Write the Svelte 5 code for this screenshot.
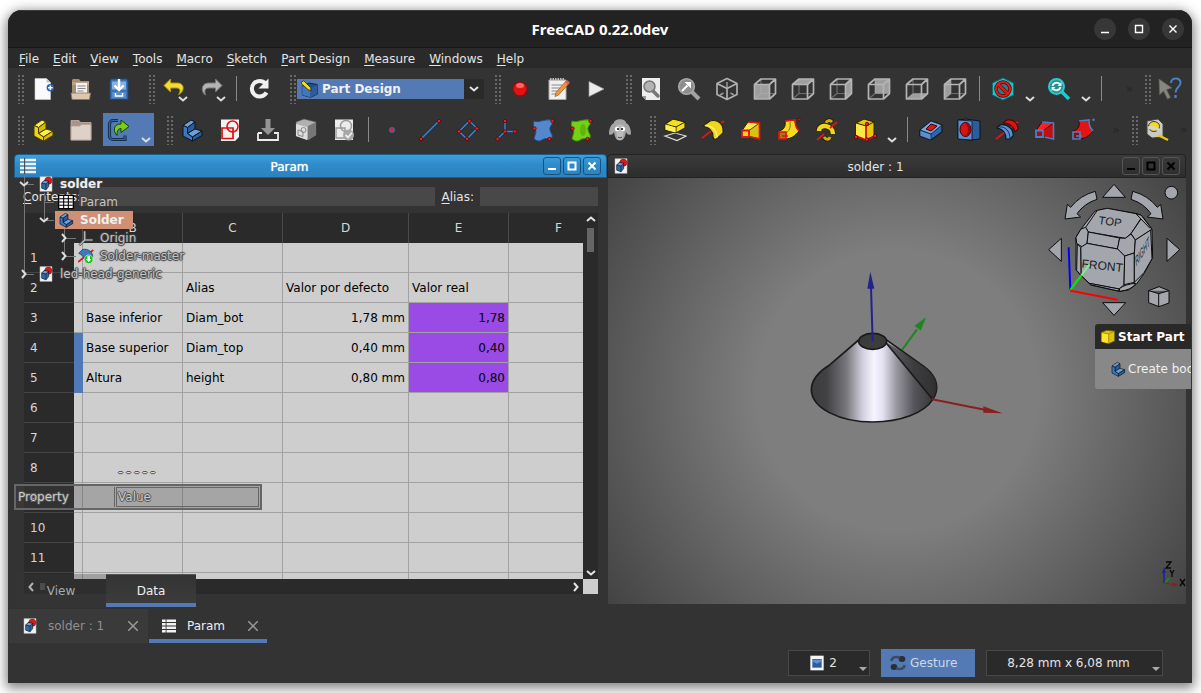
<script>
  const doc = '<path d="M3 1h18v22H3z" fill="#f4f4f4" stroke="#bbb" stroke-width=".8"/><circle cx="15.500" cy="7" r="5.400" fill="#e01515" stroke="#7d0000" stroke-width=".6"/><path d="M5.500 10.500l4-4 6.500 1.300v8l-4 5-6.500-2.600z" fill="#3465a4" stroke="#0b1521"/><path d="M5.500 10.500l6.500 1.500 4-4M12 12v8.500" fill="none" stroke="#0b1521" stroke-width=".8"/><path d="M7 10l3-2.500 5 1L12 11z" fill="#729fcf"/>';

  const body = (top, side, front, line) =>
    `<g stroke="${line}" stroke-width="1" stroke-linejoin="round"><path d="M3 7.500L11 2l4 2-7.500 5.500z" fill="${top}"/><path d="M7.500 9.500L15 4v7l-7.500 4.500z" fill="${side}"/><path d="M7.500 15.500L15 11l7 2-9.500 6z" fill="${top}"/><path d="M12.500 19l9.500-6v4.500L12.500 23z" fill="${side}"/><path d="M3 7.500l4.500 2v6l5 3.500v4L3 18z" fill="${front}"/></g>`;

  const cube = (face) => {
    const faces = {
      front: 'M1.500 7.500h15v14.500h-15z',
      top: 'M1.500 7.500L8 2h14.500l-6 5.500z',
      right: 'M16.500 7.500l6-5.500v14.500l-6 5.500z',
      rear: 'M8 2h14.500v14.500H8z',
      bottom: 'M1.500 22L8 16.500h14.500l-6 5.500z',
      left: 'M1.500 7.500L8 2v14.500L1.500 22z'
    };
    return `<path d="M8 2v14.500h14.500M8 16.500L1.500 22" fill="none" stroke="#6d6d6d" stroke-width="1.200"/><path d="${faces[face]}" fill="#b2b2b2" fill-opacity=".85"/><path d="M1.500 7.500h15v14.500h-15zM1.500 7.500L8 2h14.500l-6 5.500M22.500 2v14.500l-6 5.500" fill="none" stroke="#b4b4b4" stroke-width="1.700" stroke-linejoin="round"/>`;
  };

  const dot = (x, y, r = 1.7) => `<circle cx="${x}" cy="${y}" r="${r}" fill="#ef2020" stroke="#5c0000" stroke-width=".8"/>`;

  const icons = {
    doc,
    newdoc: '<path d="M4 1.500h11.500l4 4v17H4z" fill="#fafafa" stroke="#d0d0d0" stroke-width=".6"/><path d="M15.500 1.500v4h4z" fill="#c4c4c4"/><circle cx="19.300" cy="10.700" r="3.700" fill="#2f64ab"/><path d="M19.300 8.400v4.600M17 10.700h4.600" stroke="#fff" stroke-width="1.500"/>',
    open: '<path d="M3 3l1-1h6l1.500 2H20v14H3z" fill="#a58f74"/><path d="M3 5h17v3H3z" fill="#bda687"/><path d="M7 6h11v11H7z" fill="#f2f2f2"/><path d="M8.500 9h8M8.500 11.500h8M8.500 14h6" stroke="#888" stroke-width="1.200"/><path d="M2 16h19.500L20.500 22.500H3z" fill="#dcc8ac" stroke="#8b7759" stroke-width=".8"/>',
    save: '<path d="M4 2h16l1 3v17.500H3V5z" fill="#3a72b8" stroke="#1d4678"/><path d="M5 4.500h14v8H5z" fill="#88b0df"/><path d="M5 15h14v6H5z" fill="#5a8ccb"/><path d="M12 2v10M7.500 8.500L12 13l4.500-4.500" fill="none" stroke="#fff" stroke-width="2.400"/><path d="M8.500 16v3h7v-3" fill="none" stroke="#fff" stroke-width="1.500"/>',
    undo: '<path d="M8.500 2L2 8.500l6.500 6.500v-4h6c4 0 4.500 3 2 6.500 6-2.500 7-11.500-1.500-11.500H8.500z" fill="#f5dc35" stroke="#b39400" stroke-width="1" stroke-linejoin="round"/>',
    redo: '<path d="M15.500 2l6.500 6.500-6.500 6.500v-4H9c-3.500 0-5 2-3.500 7C1 15.500.5 6 8.500 6h7z" fill="#b4b4b4" stroke="#777" stroke-width="1" stroke-linejoin="round"/>',
    refresh: '<path d="M18.500 15.500a7.800 7.800 0 1 1-1-9" fill="none" stroke="#f0f0f0" stroke-width="4"/><path d="M20.500 1.500v10h-10z" fill="#f0f0f0"/>',
    record: '<circle cx="12" cy="12" r="7" fill="#e01212" stroke="#8b0f0f" stroke-width="1.300"/><ellipse cx="12" cy="8.500" rx="4" ry="2.500" fill="#f66"/>',
    macro: '<path d="M3 3h17v19.500H3z" fill="#f0f0f0" stroke="#aaa"/><path d="M4 2.500h15" stroke="#bcbcbc" stroke-width="3" stroke-dasharray="1.500 1"/><path d="M5.500 8h11M5.500 11h9M5.500 14h7M5.500 17h5" stroke="#888" stroke-width="1"/><path d="M20 4l3 2.500L12.500 18l-3.500 1.500 1-4z" fill="#f0953b" stroke="#a5551c" stroke-width=".7"/><path d="M19 5l2-2 3 2.500-2 2z" fill="#e05c5c"/>',
    play: '<path d="M5 4.500l15 7.500-15 7.500z" fill="#ececec" stroke="#999" stroke-width=".7"/>',
    fitall: '<path d="M3 1h18v22H7l-4-4z" fill="#ededed"/><path d="M3 19h4v4z" fill="#999"/><path d="M13 13l6 6" stroke="#777" stroke-width="3.500" stroke-linecap="round"/><circle cx="10.500" cy="9.500" r="5.500" fill="#b4b4b4" stroke="#777" stroke-width="1.500"/>',
    fitsel: '<path d="M14 14l8 8" stroke="#a2a2a2" stroke-width="4"/><circle cx="9.500" cy="9.500" r="7.800" fill="#8d8d8d" stroke="#a8a8a8" stroke-width="1.600"/><path d="M5 14l5.500-5.500" stroke="#fff" stroke-width="2"/><path d="M7.500 5H14v6.500z" fill="#fff"/>',
    iso: '<path d="M12 5v6M5 18l3.500-2M19 18l-3.500-2" stroke="#999" stroke-width="1.500"/><path d="M12 1.500l10 5v11l-10 5-10-5v-11zM2 6.500l10 5 10-5M12 11.500v11" fill="none" stroke="#b0b0b0" stroke-width="1.700" stroke-linejoin="round"/>',
    front: cube('front'), top: cube('top'), right: cube('right'), rear: cube('rear'), bottom: cube('bottom'), left: cube('left'),
    nodraw: '<path d="M12 1l10.500 5v12L12 23 1.500 18V6z" fill="#18c8cc" stroke="#0b6f72"/><circle cx="12" cy="12" r="7" fill="#1b8386" stroke="#4b0000" stroke-width="3.400"/><path d="M7 7l10 10" stroke="#4b0000" stroke-width="3.800"/><circle cx="12" cy="12" r="7" fill="none" stroke="#e21717" stroke-width="2.200"/><path d="M7 7l10 10" stroke="#e21717" stroke-width="2.600"/>',
    zoomcyan: '<path d="M14.500 14.500l7.500 7.500" stroke="#1fc8cc" stroke-width="3.500"/><circle cx="9.500" cy="9.500" r="7.500" fill="#2b8c90" stroke="#20cfd2" stroke-width="2"/><path d="M5.500 9c1-4 6-4 7.500-1.500M13.500 10c-1 4-6 4-7.500 1.500" fill="none" stroke="#eee" stroke-width="2"/><path d="M14.500 5v4h-4zM4.500 14v-4h4z" fill="#eee"/>',
    whats: '<path d="M1 2l13 9-5.500 1.500 4 8-3 1.500-4-8L1.500 18z" fill="#84867f" stroke="#5c5e58" stroke-width=".7"/><path d="M13 6c0-6 10-6 9.500 0 0 4-5 4-5 9.500" fill="none" stroke="#4a7fc1" stroke-width="2"/><path d="M17.500 18v3" stroke="#4a7fc1" stroke-width="2.500"/>',
    part: body('#fcf04a', '#d8bb00', '#eed414', '#463c00'),
    group: '<path d="M2 2.500h8l1.500 2H22V22H2z" fill="#a89489" stroke="#c5b2a8" stroke-width=".8"/><path d="M2 8h9l1-1.500h10V22H2z" fill="#ddd1c8" stroke="#b19d92" stroke-width=".8"/>',
    link: '<path d="M11 2.500H6a3.500 3.500 0 0 0-3.500 3.500v12A3.500 3.500 0 0 0 6 21.500h12v-4" fill="none" stroke="#16304f" stroke-width="3.200"/><path d="M11 2.500H6a3.500 3.500 0 0 0-3.500 3.500v12A3.500 3.500 0 0 0 6 21.500h12v-4" fill="none" stroke="#3465a4" stroke-width="1.200"/><path d="M14 2l8 6.500-8 6v-4c-3 0-4 2.500-4 7-4-4-4-11.500 4-11.500z" fill="#73d216" stroke="#173d02" stroke-width="1"/>',
    body: body('#6b9fd8', '#2b5c9c', '#3f78bd', '#0b1521'),
    sketch: '<path d="M3 1.500h18V19l-4 4H3z" fill="#f2f2f2"/><circle cx="14.500" cy="8.500" r="5.500" fill="none" stroke="#dc1010" stroke-width="1.500"/><path d="M4 10h11v10.500H4z" fill="none" stroke="#dc1010" stroke-width="1.700"/>',
    import: '<path d="M2 15v7h20v-7h-4M2 15h4" fill="none" stroke="#ececec" stroke-width="1.800"/><path d="M9.500 1h5v9h4.500L12 17 5 10h4.500z" fill="#949494"/>',
    mapsk: '<path d="M2 4l8-3 12 3v13l-8 5-12-4z" fill="#b0b0b0" stroke="#555" stroke-width=".6"/><path d="M14 8l8-4v13l-8 5z" fill="#777"/><path d="M2 6l11 3v13L2 18z" fill="#dedede"/><path d="M4 12l5 1.500v5L4 17z" fill="none" stroke="#888"/><circle cx="9.500" cy="12" r="2.500" fill="none" stroke="#888"/>',
    valid: '<path d="M3 1.500h18V22H3z" fill="#ececec"/><circle cx="14" cy="8" r="5.500" fill="none" stroke="#999" stroke-width="1.400"/><path d="M4 10h9v10H4z" fill="none" stroke="#999" stroke-width="1.400"/><circle cx="16.500" cy="17" r="5.500" fill="#a8a8a8"/><path d="M13.500 17l2.500 2.500 4-5" fill="none" stroke="#eee" stroke-width="1.800"/>',
    point: '<circle cx="12" cy="12" r="3" fill="#3465a4"/><circle cx="12" cy="12" r="1.900" fill="#ef2020"/>',
    line: '<path d="M3 21L21 3" stroke="#16304f" stroke-width="3"/><path d="M3 21L21 3" stroke="#4a80c4" stroke-width="1.400"/>' + dot(3, 21) + dot(21, 3),
    plane: '<path d="M13.500 3L21 10.500 11 21 3 13.500z" fill="none" stroke="#16304f" stroke-width="3"/><path d="M13.500 3L21 10.500 11 21 3 13.500z" fill="none" stroke="#4a80c4" stroke-width="1.400"/>' + dot(13.5, 3) + dot(21, 10.5) + dot(11, 21) + dot(3, 13.5),
    axes: '<path d="M11 3v10.500h10M11 13.500L3.500 21" fill="none" stroke="#16304f" stroke-width="3"/><path d="M11 3v10.500h10M11 13.500L3.500 21" fill="none" stroke="#4a80c4" stroke-width="1.400"/>' + dot(11, 3) + dot(11, 13.5) + dot(21, 13.5) + dot(3.5, 21),
    binder: '<path d="M2 3c6 2 8-2 19-1 1 4-4 6-3 10s3 4 2 8c-6 1-7 0-10 2s-5 1-8-1c1-5 3-7 1-10s-2-4-1-8z" fill="#5588cb" stroke="#224c83"/>' + dot(20.5, 3) + dot(2.5, 10.5) + dot(17.5, 21),
    bindgreen: '<path d="M2 3c6 2 8-2 19-1 1 4-4 6-3 10s3 4 2 8c-6 1-7 0-10 2s-5 1-8-1c1-5 3-7 1-10s-2-4-1-8z" fill="#73d216" stroke="#3e8d04"/><ellipse cx="13" cy="12" rx="3" ry="6" fill="#4e9a06" opacity=".5"/>' + dot(20.5, 3) + dot(2.5, 10.5) + dot(17.5, 21),
    sheep: '<path d="M6 5c0-5 12-5 12 0 3 1 5 6 5 11-2 2-4 0-5-2-1 5-2 8-6 8.500-4 0-5-3-6-8.500-1 2-3 4-5 2 0-5 2-10 5-11z" fill="#a5a5a5"/><path d="M8 8c2-2 6-2 8 0l-1 11c-1 4-5 4-6 0z" fill="#bcbcbc"/><circle cx="9" cy="11" r="2.200" fill="#fff"/><circle cx="15" cy="11" r="2.200" fill="#fff"/><circle cx="10" cy="11" r="1"/><circle cx="14" cy="11" r="1"/><path d="M10 19l2 1 2-1" stroke="#444" fill="none"/>',
    pad: '<path d="M2 18l10-3 11 3-9 4.500z" fill="none" stroke="#ddd" stroke-width="1.200"/><path d="M2 6l8-5 12 3v6l-9 5-11-3z" fill="#f5df1d" stroke="#2a2400" stroke-width="1.100"/><path d="M2 6l11 3 9-5M13 9v6" fill="none" stroke="#2a2400"/><path d="M2.500 6.500L12.500 9.500v5L2.500 11.700z" fill="#fcef50"/>',
    revolve: '<path d="M1 20L23 3" stroke="#e01515" stroke-width="1.800"/><path d="M2 8l7-5c8-2 13 3 13 9v3l-7 6.500c-2 0-3-1-3-3 0-5-3-9-10-10.500z" fill="#efd51b" stroke="#2a2400" stroke-width="1.100" stroke-linejoin="round"/><path d="M4 7.500c7 0 12 5 12 12" fill="none" stroke="#fbf07a" stroke-width="1.500"/>',
    loft: '<path d="M3 12.500L9 4l11.500 1v15.500L10 18.500H3z" fill="#fbe94a" stroke="#2a2400"/><path d="M10 12.500L20.500 5v15.500L10 18.500z" fill="#dcc011" stroke="#2a2400" stroke-width=".8"/><path d="M9 4l11.500 1v16l-9-2" fill="none" stroke="#e01515" stroke-width="1.700"/><path d="M3 12.500h7v6.500H3z" fill="#f3dc20" stroke="#e01515" stroke-width="1.800"/>',
    pipe: '<path d="M2 13c5-1 7-5 6-10l9-1c3 3 1 6 5 11-4 5-8 8-14 8H2z" fill="#f3dc20" stroke="#2a2400"/><path d="M13 4c1 6-1 9-4 11" fill="none" stroke="#8d7900"/><path d="M8 3l10-1c0 5 1 8 4 11" fill="none" stroke="#e01515" stroke-width="1.600"/><path d="M2 14h7v7H2z" fill="#9d7f09" stroke="#e01515" stroke-width="1.700"/><path d="M5 18h6" stroke="#e01515" stroke-width="1.500"/>' + dot(22, 1.8, 1.3),
    helix: '<path d="M9 19c2 3 5 3 6 0M11 5c1-3 4-3 6-1" stroke="#2a2400" stroke-width="5" fill="none"/><path d="M9 19c2 3 5 3 6 0M11 5c1-3 4-3 6-1" stroke="#cfaa12" stroke-width="3" fill="none"/><path d="M4 13c0-8 14-6 14 3" fill="none" stroke="#2a2400" stroke-width="6.500"/><path d="M4 13c0-8 14-6 14 3" fill="none" stroke="#efd51b" stroke-width="4.500"/><path d="M2 22l7-6M15 10l7-6" stroke="#e01515" stroke-width="1.700"/>',
    box: '<path d="M3 5l8-4 10 3v14l-8 4-10-3z" fill="#e5c70c" stroke="#2a2400"/><path d="M3 5l10 3v14L3 19z" fill="#fbe94a"/><path d="M3 5l10 3 8-4" fill="none" stroke="#2a2400"/><path d="M13 6v14M3 18l10 4 9-4" fill="none" stroke="#c00" stroke-width="1.600"/>' + dot(14, 6) + dot(3, 19) + dot(14, 21.5) + dot(22, 18),
    plainbox: '<path d="M2 5l8-3 12 1v15l-9 4-11-3z" fill="#e0c30b" stroke="#5e5000"/><path d="M2.500 6L13 7.500v14L2.500 19z" fill="#fbe52e"/><path d="M2 5l11 2.500L22 3M13 7.500V22" fill="none" stroke="#8d7900"/>',
    pocket: '<path d="M1 12l11-9 11 4v7l-11 8-11-4z" fill="#2f66ab" stroke="#0b1521" stroke-width="1.100"/><path d="M1 12l11 4v6L1 18z" fill="#5b90d0" stroke="#0b1521" stroke-width=".6"/><path d="M1 12l11-9 11 4-11 9z" fill="#76a6de" stroke="#0b1521" stroke-width=".8"/><path d="M7 11l5-5 6 2-6 5z" fill="#e01515" stroke="#3d0000"/>',
    hole: '<path d="M1 2l8-1 14 2v18l-9 1-13-1z" fill="#2b5c9c" stroke="#0b1521"/><path d="M1 2l14 1v19L1 21z" fill="#5b90d0" stroke="#0b1521" stroke-width=".8"/><ellipse cx="8.500" cy="11.500" rx="5.500" ry="7" fill="#d91212" stroke="#3d0000"/><path d="M8 5c4 3 4 10 0 13 7 0 7-13 0-13z" fill="#920a0a"/>',
    groove: '<path d="M1 21L23 4" stroke="#e01515" stroke-width="1.800"/><path d="M8 5l4-3c7-1 11 4 11 9l-3 3c-1-5-5-9-12-9z" fill="#d91212" stroke="#3d0000"/><path d="M2 10l3-3c8-2 14 5 13 11l-3 3h-4c0-6-3-10-9-11z" fill="#5b90d0" stroke="#0b1521" stroke-width="1.100"/><path d="M4 9c7-1 11 5 11 12" stroke="#16304f" fill="none"/>',
    subloft: '<path d="M3 12.500L9 4l11.500 1v15.500L10 18.500H3z" fill="#f22" stroke="#3d0000"/><path d="M10 12.500L20.500 5v15.500L10 18.500z" fill="#c00f0f" stroke="#3d0000" stroke-width=".8"/><path d="M9 4l11.500 1v16l-9-2" fill="none" stroke="#4a80c4" stroke-width="1.600"/><path d="M3 12.500h7v6.500H3z" fill="#a80e0e" stroke="#4a80c4" stroke-width="1.800"/>',
    subpipe: '<path d="M2 13c5-1 7-5 6-10l9-1c3 3 1 6 5 11-4 5-8 8-14 8H2z" fill="#e01515" stroke="#3d0000"/><path d="M8 3l10-1c0 5 1 8 4 11" fill="none" stroke="#4a80c4" stroke-width="1.600"/><path d="M2 14h7v7H2z" fill="#8e0d0d" stroke="#4a80c4" stroke-width="1.700"/><path d="M5 18h6" stroke="#4a80c4" stroke-width="1.400"/><circle cx="22.500" cy="1.800" r="1.200" fill="#4a80c4"/>',
    measure: '<path d="M2 3l11-2 5 5v13l-11 1-5-4z" fill="#c9cbc4" stroke="#454640"/><ellipse cx="9" cy="8.500" rx="5.500" ry="5" fill="#f3dc20" stroke="#3e3f38"/><path d="M3 10c4-1 8 0 11 2" stroke="#d4d5d0" stroke-width="3" fill="none"/><path d="M11 19l4-3 2 3z" fill="#e5cc14"/><path d="M15 18l8 4" stroke="#e5cc14" stroke-width="2.200"/>',
    wb: '<path d="M3 8l9-4 11 2v13l-9 4-11-3z" fill="#1f4e8c" stroke="#0b1521"/><path d="M3 8l11 3v12L3 20z" fill="#3f78bd"/><path d="M14 11l9-5v13l-9 4z" fill="#2b5c9c"/><path d="M2 3l3-2 9 9 1 4-4-1-9-8z" fill="#f3dc20" stroke="#2a2400"/>',
    sheet: '<path d="M1 2h22v20H1z" fill="#fff" stroke="#000" stroke-width="2"/><path d="M2 7h20M2 12h20M2 17h20M8.500 2v20M15.500 2v20" stroke="#000" stroke-width="1.600"/>',
    rows: '<path d="M0 3h24M0 9h24M0 15h24M0 21h24" stroke="#f2f2f2" stroke-width="4"/><path d="M7 0v24" stroke="#3a3a3a" stroke-width="1.500"/>',
    origin: '<path d="M10 2v13h12M10 15l-8 8" fill="none" stroke="#555" stroke-width="4"/><path d="M10 2v13h12M10 15l-8 8" fill="none" stroke="#bbb" stroke-width="1.800"/>',
    master: '<path d="M0 21L23 3" stroke="#e01515" stroke-width="2.500"/><path d="M1 8l6-6c8-1 15 3 15 11l-7 7c-3-1-4-2-5-4-2-4-5-6-9-8z" fill="#3f78bd" stroke="#16304f"/><circle cx="16" cy="17" r="6.500" fill="#0bc30b" stroke="#eee"/><path d="M14 12.500h4v4h2.500L16 21.500l-4.500-5H14z" fill="#fff"/>',
    view: '<path d="M2 1h20v22H2z" fill="#f5f5f5"/><path d="M5 6h14v13H5z" fill="#2c5c9f"/><path d="M6 7h12v3l-6 3-6-3z" fill="#5c8fce"/>',
    gesture: '<ellipse cx="18" cy="6" rx="5" ry="4.500" fill="#2a2e35"/><path d="M2 9c1-6 7-7 13-5" stroke="#3c4b64" stroke-width="4" fill="none"/><ellipse cx="6" cy="18" rx="5" ry="4.500" fill="#2a2e35"/><path d="M22 15c-1 6-7 7-13 5" stroke="#3c4b64" stroke-width="4" fill="none"/>'
  };

  const t = (icon, label, drop = '') => ({ icon, label, drop });
  const menus = ['File', 'Edit', 'View', 'Tools', 'Macro', 'Sketch', 'Part Design', 'Measure', 'Windows', 'Help'];
  const fileTools = [t('newdoc', 'New'), t('open', 'Open'), t('save', 'Save')];
  const editTools = [t('undo', 'Undo', 'over'), t('redo', 'Redo', 'over'), null, t('refresh', 'Refresh')];
  const macroTools = [t('record', 'Record macro'), t('macro', 'Macros'), t('play', 'Run macro')];
  const viewTools = [
    t('fitall', 'Fit all'), t('fitsel', 'Fit selection'), t('iso', 'Isometric'), t('front', 'Front'), t('top', 'Top'),
    t('right', 'Right'), t('rear', 'Rear'), t('bottom', 'Bottom'), t('left', 'Left'), null,
    t('nodraw', 'Draw style', 'wide'), t('zoomcyan', 'Sync view', 'wide'), null
  ];
  const structure = [t('part', 'Create part'), t('group', 'Create group'), t('link', 'Make link', 'wide active')];
  const helper = [
    t('body', 'Create body'), t('sketch', 'Create sketch'), t('import', 'Edit sketch'), t('mapsk', 'Map sketch'), t('valid', 'Validate sketch'), null,
    t('point', 'Datum point'), t('line', 'Datum line'), t('plane', 'Datum plane'), t('axes', 'Local coordinate system'),
    t('binder', 'Shape binder'), t('bindgreen', 'Sub-shape binder'), t('sheep', 'Clone')
  ];
  const modeling = [
    t('pad', 'Pad'), t('revolve', 'Revolution'), t('loft', 'Additive loft'), t('pipe', 'Additive pipe'), t('helix', 'Additive helix'),
    t('box', 'Additive primitive', 'wide'), null,
    t('pocket', 'Pocket'), t('hole', 'Hole'), t('groove', 'Groove'), t('subloft', 'Subtractive loft'), t('subpipe', 'Subtractive pipe')
  ];

  const cells = {
    2: ['', 'Alias', 'Valor por defecto', 'Valor real'],
    3: ['Base inferior', 'Diam_bot', '1,78 mm', '1,78'],
    4: ['Base superior', 'Diam_top', '0,40 mm', '0,40'],
    5: ['Altura', 'height', '0,80 mm', '0,80']
  };
  const rows = Array.from({ length: 12 }, (_, i) => ({ n: i + 1, c: cells[i + 1] ?? ['', '', '', ''] }));

  const tree = [
    { d: 0, open: true, icon: 'doc', text: 'solder', bold: true },
    { d: 1, icon: 'sheet', text: 'Param' },
    { d: 1, open: true, icon: 'body', text: 'Solder', bold: true, sel: true },
    { d: 2, open: false, icon: 'origin', text: 'Origin' },
    { d: 2, open: false, icon: 'master', text: 'Solder-master' },
    { d: 0, open: false, icon: 'doc', text: 'led-head-generic' }
  ];
</script>

{#snippet ico(name, cls = 'i24')}
  <svg class={cls} viewBox="0 0 24 24" aria-hidden="true">{@html icons[name]}</svg>
{/snippet}

{#snippet chev(cls)}
  <svg class={cls} viewBox="0 0 10 6" aria-hidden="true"><path d="M1 1l4 3.500L9 1" fill="none" stroke="currentColor" stroke-width="2" /></svg>
{/snippet}

{#snippet group(items)}
  <div class="group" role="toolbar">
    <span class="handle"></span>
    {#each items as it}
      {#if it}
        <button class="tool {it.drop}" aria-label={it.label}>
          {@render ico(it.icon)}
          {#if it.drop}{@render chev('drop')}{/if}
        </button>
      {:else}
        <span class="sep"></span>
      {/if}
    {/each}
  </div>
{/snippet}

{#snippet winButtons()}
  <div class="winbtns">
    <button aria-label="Minimize"><svg viewBox="0 0 12 12"><path d="M2 9h8" /></svg></button>
    <button aria-label="Maximize"><svg viewBox="0 0 12 12"><path d="M2.500 2.500h7v7h-7z" /></svg></button>
    <button aria-label="Close"><svg viewBox="0 0 12 12"><path d="M2.500 2.500l7 7M9.500 2.500l-7 7" /></svg></button>
  </div>
{/snippet}

<div class="page">
  <main class="window">
    <header class="title">
      <h1>FreeCAD 0.22.0dev</h1>
      <div class="ctl">
        <button aria-label="Minimize window"><svg viewBox="0 0 12 12"><path d="M2 9.500h8" /></svg></button>
        <button aria-label="Maximize window"><svg viewBox="0 0 12 12"><path d="M2.500 2.500h7v7h-7z" /></svg></button>
        <button aria-label="Close window"><svg viewBox="0 0 12 12"><path d="M2.500 2.500l7 7M9.500 2.500l-7 7" /></svg></button>
      </div>
    </header>

    <nav class="menu">
      {#each menus as m}<button><u>{m[0]}</u>{m.slice(1)}</button>{/each}
    </nav>

    <div class="toolrow">
      {@render group(fileTools)}
      {@render group(editTools)}
      <div class="group">
        <span class="handle"></span>
        <div class="combo">
          {@render ico('wb', 'i18')}
          <select aria-label="Workbench"><option>Part Design</option></select>
          <span class="arrow">{@render chev('cv')}</span>
        </div>
      </div>
      {@render group(macroTools)}
      {@render group(viewTools)}
      <button class="more end" aria-label="More view tools">»</button>
      {@render group([t('whats', "What's this?")])}
    </div>
    <div class="toolrow second">
      {@render group(structure)}
      {@render group(helper)}
      {@render group(modeling)}
      <button class="more" aria-label="More modeling tools">»</button>
      <div class="end">{@render group([t('measure', 'Measure')])}</div>
      <button class="more last" aria-label="More measure tools">»</button>
    </div>

    <section class="work">
      <article class="sub active">
        <header class="subtitle">
          {@render ico('rows', 'i16')}
          <h2>Param</h2>
          {@render winButtons()}
        </header>
        <div class="form">
          <label for="contents"><u>C</u>ontents:</label>
          <input id="contents" class="grow" />
          <label for="alias"><u>A</u>lias:</label>
          <input id="alias" />
        </div>
        <div class="sheet">
          <div class="clip">
            <table>
              <colgroup><col class="ch" /><col class="ca" /><col class="cb" /><col class="cb" /><col class="cd" /><col class="cb" /><col class="cb" /></colgroup>
              <thead><tr><th></th><th></th><th>B</th><th>C</th><th>D</th><th>E</th><th>F</th></tr></thead>
              <tbody>
                {#each rows as r}
                  <tr>
                    <th scope="row">{r.n}</th>
                    <td class:mark={r.n === 4 || r.n === 5}></td>
                    <td>{r.c[0]}</td>
                    <td>{r.c[1]}</td>
                    <td class:num={r.n > 2}>{r.c[2]}</td>
                    <td class:num={r.n > 2} class:hot={r.n > 2 && r.n < 6}>{r.c[3]}</td>
                    <td></td>
                  </tr>
                {/each}
              </tbody>
            </table>
          </div>
          <div class="vbar">{@render chev('cv up')}<span class="thumb"></span>{@render chev('cv down')}</div>
          <div class="hbar">{@render chev('cv prev')}<span class="nub"></span>{@render chev('cv next')}</div>
          <div class="corner"></div>
        </div>
      </article>

      <article class="sub">
        <header class="subtitle">
          {@render ico('doc', 'i16')}
          <h2>solder : 1</h2>
          {@render winButtons()}
        </header>
        <div class="view">
          <svg class="model" viewBox="0 0 720 540" aria-hidden="true">
            <defs>
              <linearGradient id="metal" x1="94" x2="470" y1="0" y2="0" gradientUnits="userSpaceOnUse">
                <stop offset="0" stop-color="#3c3c3e" /><stop offset=".12" stop-color="#414143" /><stop offset=".28" stop-color="#77777c" />
                <stop offset=".41" stop-color="#d2d0de" /><stop offset=".5" stop-color="#f6f4ff" /><stop offset=".57" stop-color="#e4e1f2" />
                <stop offset=".68" stop-color="#98979f" /><stop offset=".82" stop-color="#55555a" /><stop offset="1" stop-color="#333" />
              </linearGradient>
            </defs>
            <path d="M366 270l45-62" stroke="#1e861e" stroke-width="6" />
            <path d="M437 173l-33 24 18 14z" fill="#1e861e" stroke="#1e861e" />
            <path d="M236 240L150 314C112 337 94 360 94 390c2 55 85 96 184 96 85 0 154-27 180-67 8-12 12-24 12-37 0-28-18-50-50-71L320 240z" fill="url(#metal)" stroke="#1a1a1a" stroke-width="5" />
            <path d="M318 246l140 172c8-12 12-24 12-37 0-28-18-50-50-71z" fill="#303031" opacity=".65" />
            <path d="M318 248l139 169" stroke="#1a1a1a" stroke-width="5" />
            <ellipse cx="278" cy="244" rx="42" ry="24" fill="#3c3c3c" stroke="#1a1a1a" stroke-width="5" />
            <path d="M278 244L273 80" stroke="#22228f" stroke-width="6" />
            <path d="M271 35l-9 51h21z" fill="#22228f" />
            <path d="M456 418l158 31" stroke="#8a1f1f" stroke-width="6" />
            <path d="M668 460l-58-21v19z" fill="#8a1f1f" />
          </svg>

          <svg class="nav" viewBox="78 96 414 402" aria-hidden="true">
            <g fill="#a3a7ad" stroke="#0b0b0b" stroke-width="3" stroke-linejoin="round">
              <path d="M282 103l34 39h-68zM282 496l-34-38h69zM86 299l38-34v69zM479 299l-38-34v69z" />
              <circle cx="454" cy="128" r="19" />
              <path d="M226 124l5 24q-38 12-60 43l11 10-47 6 7-44 10 9q28-36 74-48z" />
              <path d="M338 124l-5 24q38 12 60 43l-11 10 47 6-7-44-10 9q-28-36-74-48z" />
              <path d="M417 410l30 12v37l-30 11-31-12v-36zM386 422l30 9 31-9M416 431v39" />
              <path d="M168 262l15-25 42-54 37-8 88 16 16 6 30 41 2 85-26 48-24 33-23 16-27 4-86-19-29-29-15-16z" />
              <path d="M232 181l30-6 86 16 15 14-30 46-17 14-111-19-8-14z" />
              <path d="M348 191l16 5 32 42-50 32-13-19 30-44zM363 207l27 28" />
              <path d="M183 237l14-5 8 14-4 34-14 11-17-11-2-18z" />
              <path d="M205 246l94 18-6 33-92-17z" />
              <path d="M299 264l17 1 17-13 13 18-3 39-29 9-22-21z" />
              <path d="M182 292l19-12 92 17 21 21-2 86-14 13-90-17-25-24z" />
              <path d="M172 282l10 10 1 84-13-15z" />
              <path d="M314 318l29-9v88l-31 7z" />
              <path d="M346 270l46-30 4 86-24 42-29 29v-88z" />
              <path d="M298 416q18-14 50-16-12 20-50 24zM208 400l90 17-3 6-80-18z" />
            </g>
            <g fill="#1b1b1b" font-family="Liberation Sans, sans-serif">
              <text x="242" y="223" font-size="34" transform="rotate(7 242 223) skewX(-2)">TOP</text>
              <text x="184" y="353" font-size="36" transform="rotate(6 185 353)">FRONT</text>
              <text font-size="25" transform="translate(348 350) rotate(-57) skewX(-50)">RIGHT</text>
            </g>
            <path d="M151 418l-5-126" stroke="#0000ff" stroke-width="6" />
            <path d="M152 418l32-42" stroke="#00f000" stroke-width="6" />
            <path d="M184 376l24-32" stroke="#7df08a" stroke-width="6" />
            <path d="M151 422l142 27" stroke="#ff0000" stroke-width="6" />
          </svg>

          <svg class="tri" viewBox="0 0 26 30" aria-hidden="true">
            <path d="M4 22V10" stroke="#22228f" stroke-width="1.500" /><path d="M4 6l-2 6h4z" fill="#22228f" />
            <path d="M5 22l4-5" stroke="#1e861e" stroke-width="2" /><path d="M4 22l9 1.500" stroke="#8a1f1f" /><path d="M19 24l-7-2.500v4z" fill="#8a1f1f" />
            <path d="M6 1h5l-5 6h5M10 9l2 3.500L14 9M12 12.500V16M20 18l5 7M25 18l-5 7" fill="none" stroke="#080808" stroke-width="1.300" />
          </svg>
        </div>
      </article>

      <div class="tree" role="tree">
        <svg class="lines" viewBox="0 0 90 110" aria-hidden="true">
          <path d="M16.500 0v100M16 9.500h10M36.500 18v27M37 27.500h9M36 45.500h10M56.500 54v28M56 63.500h12M56 81.500h12M16 99.500h10" fill="none" stroke="#777" />
        </svg>
        {#each tree as n}
          <div class="node" role="treeitem" aria-selected={!!n.sel} style:padding-left="{8 + 20 * n.d}px">
            <span class="tw">{#if n.open !== undefined}{@render chev(n.open ? 'cv' : 'cv next')}{/if}</span>
            <span class="item" class:sel={n.sel}>{@render ico(n.icon, 'i16')}<span class:bold={n.bold}>{n.text}</span></span>
          </div>
        {/each}
      </div>

      <div class="props">
        <span class="dashes">{#each '-----' as c}<span>{c}</span>{/each}</span>
        <table class="ptable"><thead><tr><th>Property</th><th>Value</th></tr></thead></table>
        <div class="ptabs">
          <button>View</button>
          <button class="on">Data</button>
        </div>
      </div>

      <aside class="task">
        <h3>{@render ico('plainbox', 'i16')}Start Part</h3>
        <button>{@render ico('body', 'i16')}Create body</button>
      </aside>
    </section>

    <div class="tabs">
      <button class="tab">{@render ico('doc', 'i16')}<span>solder : 1</span><svg class="x" viewBox="0 0 10 10"><path d="M0 0l10 10M10 0L0 10" /></svg></button>
      <button class="tab on">{@render ico('rows', 'i14')}<span>Param</span><svg class="x" viewBox="0 0 10 10"><path d="M0 0l10 10M10 0L0 10" /></svg></button>
    </div>

    <footer class="status">
      <button class="box two">{@render ico('view', 'i16')}2<i></i></button>
      <button class="gest">{@render ico('gesture', 'i16')}Gesture</button>
      <button class="box dims">8,28 mm x 6,08 mm<i></i></button>
    </footer>
  </main>
</div>

<style>
  :global(body) { margin: 0; background: #fff; }
  .page {
    box-sizing: border-box; height: 100vh; padding: 10px 9px 10px 8px; display: flex; overflow: hidden; background: #fff;
    font: 12px/18px "DejaVu Sans", sans-serif; color: #e4e4e4;
  }
  .page * { box-sizing: border-box; }
  button, input, select { font: inherit; color: inherit; border: 0; background: none; padding: 0; margin: 0; border-radius: 0; }
  h1, h2, h3 { margin: 0; font-size: 12px; font-weight: normal; }
  svg { display: block; flex: none; }
  .i24 { width: 24px; height: 24px; }
  .i18 { width: 18px; height: 18px; }
  .i16 { width: 16px; height: 16px; }
  .i14 { width: 14px; height: 14px; }
  .cv { width: 10px; height: 6px; }
  .up { transform: rotate(180deg); }
  .prev { transform: rotate(90deg); }
  .next { transform: rotate(-90deg); }

  .window {
    flex: 1; min-width: 0; display: flex; flex-direction: column; background: #333; overflow: hidden;
    border-radius: 14px 14px 0 0; box-shadow: 0 3px 12px 2px rgba(0, 0, 0, 0.5);
  }
  .title { flex: none; height: 38px; display: flex; align-items: center; background: #222; border-top: 1px solid #3c3c3c; border-bottom: 1px solid #171717; padding: 0 8px 0 98px; }
  .title h1 { flex: 1; text-align: center; font: bold 15px/20px "Noto Sans", sans-serif; color: #fff; }
  .ctl { display: flex; gap: 12px; width: 90px; }
  .ctl button { width: 22px; height: 22px; border-radius: 50%; background: #373737; display: grid; place-items: center; }
  .ctl svg, .winbtns svg { width: 12px; height: 12px; fill: none; stroke: #fff; stroke-width: 1.400; }

  .menu { flex: none; height: 20px; background: #2a2a2a; padding-left: 4px; display: flex; }
  .menu button { padding: 0 7px; line-height: 22px; }
  u { text-underline-offset: 2px; }

  .toolrow { flex: none; height: 41px; padding: 0 3px 0 9px; display: flex; align-items: center; gap: 10px; }
  .toolrow.second { padding-right: 4px; }
  .group { display: flex; align-items: center; }
  .handle { width: 7px; height: 30px; background: radial-gradient(circle, #686868 1px, transparent 1px) 0 0 / 4px 4px; }
  .tool { position: relative; width: 38px; height: 33px; display: flex; align-items: center; padding-left: 7px; }
  .tool.wide { width: 56px; }
  .tool.active { width: 51px; margin: 0 2px 0 3px; padding-left: 4px; background: #547ab5; }
  .drop { position: absolute; right: 5px; bottom: 3px; width: 10px; height: 6px; color: #dcdcdc; }
  .active .drop { right: 3px; }
  .sep { width: 10px; height: 25px; background: linear-gradient(#8a8a8a, #8a8a8a) center / 1px 100% no-repeat; }
  .more { color: #252525; width: 9px; font-size: 12px; }
  .last { margin-left: -6px; }
  .end { margin-left: auto; }
  .combo { display: flex; width: 187px; height: 20px; background: #547ab5; align-items: center; margin-left: 1px; padding-left: 3px; }
  .combo select { flex: 1; min-width: 0; height: 20px; padding-left: 4px; appearance: none; font-weight: bold; color: #f0f0f0; }
  .combo .arrow { width: 20px; height: 20px; background: #2a2a2a; display: grid; place-items: center; }

  .work { position: relative; flex: 1; min-height: 0; margin-top: 4px; padding: 0 6px; display: grid; grid-template: minmax(0, 1fr) / 593fr 579fr; }
  .sub { display: flex; flex-direction: column; min-width: 0; min-height: 0; }
  .subtitle { height: 24px; padding: 0 5px; display: flex; align-items: center; background: linear-gradient(#3a3a3a, #2d2d2d); border: 1px solid #222; border-radius: 4px 4px 0 0; }
  .active > .subtitle { background: linear-gradient(#3e9fdd, #2f8bc9 45%, #2b82be); border-color: #1d5d8c; }
  .subtitle h2 { flex: 1; text-align: center; padding-top: 2px; }
  .active > .subtitle h2 { color: #fff; text-shadow: 0 0 1px #fff; }
  .winbtns { display: flex; gap: 2px; }
  .winbtns button { width: 18px; height: 18px; border: 1px solid #555; border-radius: 3px; display: grid; place-items: center; }
  .winbtns svg { stroke: #000; stroke-width: 2; }
  .active .winbtns button { border-color: #175380; }
  .active .winbtns svg { stroke: #fff; }

  .form { display: flex; align-items: center; padding: 9px 9px 7px; height: 35px; gap: 6px; }
  .form input { background: #484848; height: 19px; width: 118px; }
  .form .grow { flex: 1; min-width: 0; margin-left: -8px; }
  .sheet { flex: 1; min-height: 0; margin: 0 9px 10px 10px; display: grid; grid-template: minmax(0, 1fr) 15px / minmax(0, 1fr) 15px; }
  .clip { overflow: hidden; background: #cecece; }
  .clip table { border-collapse: separate; border-spacing: 0; table-layout: fixed; width: 585px; color: #000; }
  .ch { width: 50px; } .ca { width: 9px; } .cb { width: 100px; } .cd { width: 126px; }
  .clip th { background: #2a2a2a; color: #d6d6d6; font-weight: normal; height: 30px; padding: 0; border-right: 1px solid #4a4a4a; }
  .clip thead th:first-child { border: 0; }
  .clip th[scope] { text-align: left; padding-left: 6px; border-right: 0; border-bottom: 1px solid #444; }
  .clip td { height: 30px; padding: 0 3px; border-right: 1px solid #a2a2a2; border-bottom: 1px solid #a2a2a2; white-space: nowrap; }
  .clip .num { text-align: right; }
  .clip .hot { background: #9a4be5; }
  .clip .mark { background: #5079b8; border-color: #5079b8; }
  .vbar { background: #2a2a2a; display: flex; flex-direction: column; align-items: center; padding: 3px 0; }
  .thumb { width: 7px; height: 24px; background: #666; margin-top: 6px; }
  .down { margin-top: auto; }
  .hbar { background: #2a2a2a; display: flex; align-items: center; padding: 0 2px; }
  .nub { width: 5px; height: 7px; background: #555; margin-left: 4px; }
  .hbar .next { margin-left: auto; }
  .corner { background: #cecece; }

  .view { position: relative; flex: 1; margin-left: 1px; overflow: hidden; background: radial-gradient(circle at center, #7e7e7e 140px, #404040 370px); }
  .model { position: absolute; left: calc(50% - 117px); top: calc(50% - 131px); width: 240px; height: 180px; }
  .nav { position: absolute; right: 2px; top: 4px; width: 138px; height: 134px; }
  .tri { position: absolute; right: 0; bottom: 13px; width: 26px; height: 30px; }

  .tree { position: absolute; left: 0; top: 21px; color: #c4c4c4; }
  .lines { position: absolute; left: 0; top: 0; width: 90px; height: 110px; }
  .node { position: relative; display: flex; height: 18px; align-items: center; }
  .tw { width: 16px; display: grid; place-items: center; color: #ddd; }
  .item { display: flex; align-items: center; gap: 6px; height: 18px; margin-left: 3px; padding: 0 3px; white-space: nowrap; text-shadow: 1px 0 1px #444, -1px 0 1px #444, 0 1px 1px #444, 0 -1px 1px #444, 0 0 2px #444; }
  .item.sel { background: #cf9076; color: #fff; padding-right: 9px; text-shadow: none; }
  .bold { font-weight: bold; color: #f0f0f0; }

  .props { position: absolute; left: 6px; bottom: -3px; height: 146px; width: 248px; display: flex; flex-direction: column; }
  .dashes { display: flex; gap: 3px; padding-left: 104px; height: 23px; font-size: 14px; line-height: 22px; color: #ddd; text-shadow: 1px 0 #555, -1px 0 #555, 0 1px #555, 0 -1px #555; }
  .ptable { width: 248px; height: 26px; border-spacing: 1px; table-layout: fixed; border: 2px solid #666; background: rgba(70, 70, 70, 0.3); color: #c9c9c9; text-shadow: 1px 0 #555, -1px 0 #555, 0 1px #555, 0 -1px #555; }
  .ptable th { font-weight: normal; text-align: left; padding: 0 1px; border: 1px solid #666; }
  .ptable th:first-child { width: 98px; border-width: 0 1px 0 0; }
  .ptabs { display: flex; margin-top: auto; height: 33px; margin-left: 2px; }
  .ptabs button { width: 90px; color: #aaa; background: rgba(55, 55, 55, 0.3); }
  .ptabs .on { background: linear-gradient(#333, #3d3d3d); color: #f0f0f0; box-shadow: inset 0 -4px #547ab5, inset 0 1px #555; }

  .task { position: absolute; right: 1px; top: 170px; width: 96px; overflow: hidden; white-space: nowrap; border-radius: 3px 0 0 3px; }
  .task h3 { height: 25px; background: #292929; display: flex; align-items: center; gap: 2px; padding-left: 5px; font-weight: bold; color: #fff; }
  .task button { height: 40px; width: 130px; background: #888; display: flex; align-items: center; gap: 2px; padding-left: 15px; color: #f0f0f0; }

  .tabs { flex: none; display: flex; height: 34px; margin-top: 5px; gap: 1px; padding-left: 1px; }
  .tab { display: flex; align-items: center; gap: 10px; width: 139px; padding: 0 10px 0 13px; background: #3a3a3a; color: #8f8f8f; }
  .tab span { flex: 1; text-align: left; }
  .tab.on { width: 118px; background: #333; color: #eee; box-shadow: inset 0 -4px #547ab5; padding: 0 9px 0 13px; gap: 11px; }
  .x { width: 10px; height: 10px; fill: none; stroke: #999; stroke-width: 1.500; }

  .status { flex: none; height: 40px; display: flex; align-items: center; justify-content: flex-end; gap: 11px; padding-right: 29px; }
  .box { position: relative; height: 26px; border: 1px solid #484848; background: #2a2a2a; display: flex; align-items: center; justify-content: center; gap: 4px; padding-right: 12px; }
  .two { width: 82px; }
  .dims { width: 177px; }
  .box i { position: absolute; right: 2px; bottom: 4px; border: 4px solid transparent; border-top-color: #aaa; border-bottom: 0; }
  .gest { height: 28px; width: 94px; background: #547ab5; display: flex; align-items: center; gap: 4px; padding-left: 9px; color: #cfd8e6; }
</style>
